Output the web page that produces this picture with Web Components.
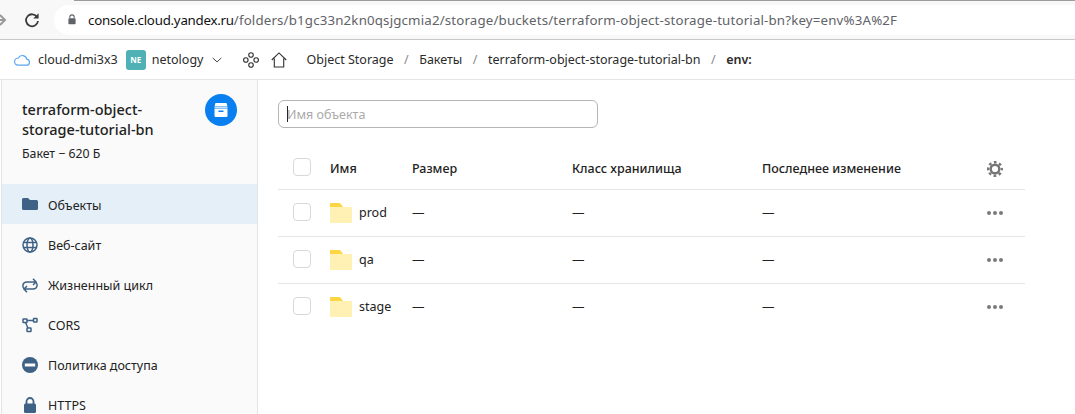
<!DOCTYPE html>
<html>
<head>
<meta charset="utf-8">
<style>
html,body{margin:0;padding:0;height:100%;overflow:hidden;background:#fff}
body{font:12.5px "Noto Sans",sans-serif;color:#222}
</style>
</head>
<body>
<browser-bar></browser-bar>
<crumb-bar></crumb-bar>
<app-body>
  <side-nav slot="side"></side-nav>
  <object-table slot="main"></object-table>
</app-body>
<script>
class BrowserBar extends HTMLElement {
    connectedCallback() {
        this.attachShadow({ mode: 'open' });
        this.shadowRoot.innerHTML = `
            <style>
                :host{display:flex;align-items:center;height:39px;background:#f8f8f8;border-bottom:1px solid #c8c8c8;overflow:hidden;position:relative}
                .fwd{width:8px;margin-left:-1px;color:#9a9a9a;display:flex}
                .reload{margin-left:17px;display:flex}
                .url{margin-left:14px;flex:1;height:30px;background:#fff;border-radius:15px 0 0 15px;display:flex;align-items:center;padding-left:14px;white-space:nowrap;font:13.3px "Noto Sans",sans-serif;color:#5f6368;letter-spacing:.16px}
                .url b{font-weight:400;color:#111;letter-spacing:-.25px}
                .lock{display:flex;margin-right:12px}
                .top{position:absolute;left:74px;right:0;top:0;height:1px;background:#9c9c9c}
            </style>
            <div class="top"></div>
            <span class="fwd"><svg width="8" height="16" viewBox="0 0 8 16"><path d="M-3 8h9M1 3l5 5-5 5" fill="none" stroke="currentColor" stroke-width="2"/></svg></span>
            <span class="reload"><svg width="16" height="16" viewBox="0 0 16 16"><path d="M13.2 5.2A6 6 0 1 0 14 9" fill="none" stroke="#3c3c3c" stroke-width="1.8"/><path d="M14.6 1.2v5.4H9.2z" fill="#3c3c3c"/></svg></span>
            <div class="url">
                <span class="lock"><svg width="8" height="11" viewBox="0 0 10 13"><path d="M2.3 5V3.4a2.7 2.7 0 0 1 5.4 0V5" fill="none" stroke="#5f6368" stroke-width="1.3"/><rect x="0.5" y="4.8" width="9" height="7.7" rx="1" fill="#5f6368"/></svg></span>
                <span><b>console.cloud.yandex.ru</b>/folders/b1gc33n2kn0qsjgcmia2/storage/buckets/terraform-object-storage-tutorial-bn?key=env%3A%2F</span>
            </div>
        `;
    }
}
customElements.define('browser-bar', BrowserBar);

class CrumbBar extends HTMLElement {
    connectedCallback() {
        this.attachShadow({ mode: 'open' });
        this.shadowRoot.innerHTML = `
            <style>
                :host{display:flex;align-items:center;height:39px;border-bottom:1px solid #e5e5e5;font:12.5px "Noto Sans",sans-serif;color:#2b2b2b;white-space:nowrap}
                .cloud{display:flex;margin-left:14px;margin-right:8px}
                .ne{width:20px;height:20px;border-radius:3px;background:#4fb0b5;color:#fff;font-size:8px;font-weight:700;display:flex;align-items:center;justify-content:center;margin:0 6px 0 8px}
                .chev{display:flex;margin-left:9px}
                .nodes{display:flex;margin-left:21px}
                .home{display:flex;margin-left:12px}
                .crumbs{display:flex;margin-left:19px}
                .sep{color:#8a8a8a;margin:0 10.5px}
                b{font-weight:600}
            </style>
            <span class="cloud"><svg width="16" height="12" viewBox="0 0 16 12"><path d="M4 11.2h8.2a3 3 0 0 0 .5-6A4.4 4.4 0 0 0 4.400 4a3.600 3.600 0 0 0-.4 7.200z" fill="none" stroke="#5aa5f0" stroke-width="1.200"/></svg></span>
            <span>cloud-dmi3x3</span>
            <span class="ne">NE</span>
            <span>netology</span>
            <span class="chev"><svg width="10" height="6" viewBox="0 0 11 6"><path d="M.7.700l4.800 4.400L10.300.700" fill="none" stroke="#333" stroke-width="1"/></svg></span>
            <span class="nodes"><svg width="16" height="16" viewBox="0 0 17 17" fill="none" stroke="#333" stroke-width="1.200"><circle cx="8.500" cy="3.200" r="2.400"/><circle cx="3" cy="8.500" r="2.400"/><circle cx="14" cy="8.500" r="2.400"/><circle cx="8.500" cy="13.800" r="2.400"/></svg></span>
            <span class="home"><svg width="16" height="16" viewBox="0 0 17 17"><path d="M.8 8.500L8.500 1l7.700 7.500M3.500 7v9h10V7" fill="none" stroke="#333" stroke-width="1.200"/></svg></span>
            <span class="crumbs">Object Storage<span class="sep">/</span>Бакеты<span class="sep">/</span>terraform-object-storage-tutorial-bn<span class="sep">/</span><b>env:</b></span>
        `;
    }
}
customElements.define('crumb-bar', CrumbBar);

class AppBody extends HTMLElement {
    connectedCallback() {
        this.attachShadow({ mode: 'open' });
        this.shadowRoot.innerHTML = `
            <style>
                :host{display:grid;grid-template-columns:258px 1fr;height:334px;overflow:hidden}
            </style>
            <slot name="side"></slot>
            <slot name="main"></slot>
        `;
    }
}
customElements.define('app-body', AppBody);

const NAV = [
    ['Объекты', '<path d="M0 2.500a1.500 1.500 0 0 1 1.500-1.500h4.500l2 2h6.500a1.500 1.500 0 0 1 1.500 1.500v7a1.500 1.500 0 0 1-1.500 1.500h-13A1.500 1.500 0 0 1 0 11.500z" fill="#3e6285"/>', true],
    ['Веб-сайт', '<g fill="none" stroke="#3e6285" stroke-width="1.500"><circle cx="8" cy="8" r="7"/><ellipse cx="8" cy="8" rx="3" ry="7"/><path d="M1 5.500h14M1 10.500h14"/></g>'],
    ['Жизненный цикл', '<g fill="none" stroke="#3e6285" stroke-width="1.500"><path d="M3.500 12.500C1 11.800.8 9 1 8c.3-2 2-3 4-3h9"/><path d="M11 1.800L14 5l-3 3"/><path d="M12.500 4.500C15 5.200 15.200 8 15 9c-.3 2-2 3-4 3H2"/><path d="M5 9l-3 3 3 3.200"/></g>'],
    ['CORS', '<g fill="none" stroke="#3e6285" stroke-width="1.500"><rect x="1" y="2" width="4" height="3.500" rx=".5"/><rect x="11.500" y="1.500" width="3.500" height="3.500" rx=".5"/><rect x="5" y="11" width="4" height="3.500" rx=".5"/><path d="M5 3.500h6.500M3.500 5.500L6 11"/></g>'],
    ['Политика доступа', '<circle cx="8" cy="8" r="8" fill="#3e6285"/><rect x="2.800" y="6.500" width="10.400" height="3" fill="#fafafa"/>'],
    ['HTTPS', '<path d="M4.500 7V4.500a3.500 3.500 0 0 1 7 0V7" fill="none" stroke="#3e6285" stroke-width="1.800"/><rect x="2" y="6.500" width="12" height="9.500" rx="1.500" fill="#3e6285"/>']
];

class SideNav extends HTMLElement {
    connectedCallback() {
        this.attachShadow({ mode: 'open' });
        this.shadowRoot.innerHTML = `
            <style>
                :host{display:block;margin-left:1px;border-left:1px solid #e4e4e4;border-right:1px solid #e4e4e4;background:#fafafa;font:12.5px "Noto Sans",sans-serif;color:#222;height:100%}
                .head{display:flex;justify-content:space-between;height:104px;box-sizing:border-box;padding:19px 20px 0 20px}
                .title{font-size:14.500px;font-weight:500;line-height:20px;color:#222}
                .size{font-size:12.300px;line-height:16px;margin-top:7px}
                .badge{width:32px;height:32px;border-radius:50%;background:#0a7ff0;display:flex;align-items:center;justify-content:center;margin-top:-5px;flex:none}
                .item{display:flex;align-items:center;height:40px;box-sizing:border-box;padding:2px 0 0 20px;gap:10px}
                .item.on{background:#e5eff8}
                svg{flex:none}
            </style>
            <div class="head">
                <div>
                    <div class="title">terraform-object-<br>storage-tutorial-bn</div>
                    <div class="size">Бакет − 620 Б</div>
                </div>
                <div class="badge"><svg width="16" height="16" viewBox="0 0 16 16"><path d="M2.500 1h11l1 3.500h-13z" fill="#fff"/><rect x="1.500" y="5" width="13" height="1" fill="#cfe4fb"/><path d="M1.500 6.500h13v7.500a1 1 0 0 1-1 1h-11a1 1 0 0 1-1-1z" fill="#fff"/><rect x="5.500" y="8.500" width="5" height="1.500" fill="#0a7ff0"/></svg></div>
            </div>
            ${NAV.map(([t, icon, on]) => `<div class="item${on ? ' on' : ''}"><svg width="16" height="16" viewBox="0 0 16 16">${icon}</svg><span>${t}</span></div>`).join('')}
        `;
    }
}
customElements.define('side-nav', SideNav);

class ObjectRow extends HTMLElement {
    connectedCallback() {
        const name = this.getAttribute('name');
        this.attachShadow({ mode: 'open' });
        this.shadowRoot.innerHTML = `
            <style>
                :host{display:grid;grid-template-columns:52px 82px 160px 190px 1fr 38px;align-items:center;height:44px;padding-bottom:2px;border-bottom:1px solid #e5e5e5;font:12.5px "Noto Sans",sans-serif;color:#222}
                :host(:last-child){border-bottom:0}
                .check{width:16px;height:16px;border:1px solid #d8d8d8;border-radius:4px;margin-left:15px}
                .name{display:flex;align-items:center;gap:7px}
                .name svg{margin-top:2px}
                .dots{display:flex;gap:2px;margin-top:2px}
                .dots i{width:4px;height:4px;border-radius:50%;background:#7a7a7a}
            </style>
            <div class="check"></div>
            <div class="name"><svg width="22" height="20" viewBox="0 0 22 20"><path d="M0 0h10l3 4H0z" fill="#fdd545"/><rect y="4" width="22" height="16" fill="#fff0b3"/></svg><span>${name}</span></div>
            <div>—</div><div>—</div><div>—</div>
            <div class="dots"><i></i><i></i><i></i></div>
        `;
    }
}
customElements.define('object-row', ObjectRow);

class ObjectTable extends HTMLElement {
    connectedCallback() {
        this.attachShadow({ mode: 'open' });
        this.shadowRoot.innerHTML = `
            <style>
                :host{display:block;padding:20px 50px 0 20px;font:12.5px "Noto Sans",sans-serif;color:#222}
                .search{width:320px;height:28px;box-sizing:border-box;border:1px solid #b5b5b5;border-radius:6px;display:flex;align-items:center;padding-left:8px;color:#aaa}
                .caret{width:1px;height:16px;background:#222;margin-right:-1px}
                .head{display:grid;grid-template-columns:52px 82px 160px 190px 1fr 38px;align-items:center;height:44px;margin-top:17px;border-bottom:1px solid #e5e5e5;font-weight:500;color:#222}
                .head .col{padding-top:3px}
                .check{width:16px;height:16px;border:1px solid #d8d8d8;border-radius:4px;margin-left:15px}
                .gear{display:flex;margin-top:3px}
            </style>
            <div class="search"><span class="caret"></span>Имя объекта</div>
            <div class="head">
                <div class="check"></div><div class="col">Имя</div><div class="col">Размер</div><div class="col">Класс хранилища</div><div class="col">Последнее изменение</div>
                <div class="gear"><svg width="16" height="16" viewBox="0 0 16 16" fill="none" stroke="#757575"><circle cx="8" cy="8" r="4.300" stroke-width="2.400"/><circle cx="8" cy="8" r="6.800" stroke-width="2.400" stroke-dasharray="2.700 2.640" stroke-dashoffset="1.350"/></svg></div>
            </div>
            <object-row name="prod"></object-row>
            <object-row name="qa"></object-row>
            <object-row name="stage"></object-row>
        `;
    }
}
customElements.define('object-table', ObjectTable);
</script>
</body>
</html>
